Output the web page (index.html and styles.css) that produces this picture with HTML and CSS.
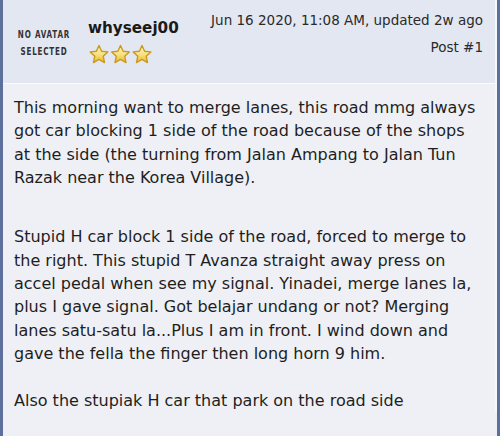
FILE: index.html
```html
<!DOCTYPE html>
<html>
<head>
<meta charset="utf-8">
<link rel="stylesheet" href="styles.css">
</head>
<body>
<div class="post">
  <div class="head">
    <div class="avatar"><span>NO AVATAR</span><span>SELECTED</span></div>
    <div class="user">
      <div class="name">whyseej00</div>
      <div class="stars">
        <svg width="66" height="21" viewBox="0 0 66 21">
          <defs>
            <linearGradient id="g" x1="0" y1="0" x2="0" y2="1">
              <stop offset="0" stop-color="#fff6c8"/>
              <stop offset="0.55" stop-color="#f7df7a"/>
              <stop offset="1" stop-color="#e9b930"/>
            </linearGradient>
          </defs>
          <g fill="url(#g)" stroke="#c99a1e" stroke-width="1.4" stroke-linejoin="round">
            <path d="M11 1.5 L13.6 7.2 L19.8 7.9 L15.2 12.2 L16.5 18.6 L11 15.4 L5.5 18.6 L6.8 12.2 L2.2 7.9 L8.4 7.2 Z"/>
            <path transform="translate(21.5 0)" d="M11 1.5 L13.6 7.2 L19.8 7.9 L15.2 12.2 L16.5 18.6 L11 15.4 L5.5 18.6 L6.8 12.2 L2.2 7.9 L8.4 7.2 Z"/>
            <path transform="translate(43 0)" d="M11 1.5 L13.6 7.2 L19.8 7.9 L15.2 12.2 L16.5 18.6 L11 15.4 L5.5 18.6 L6.8 12.2 L2.2 7.9 L8.4 7.2 Z"/>
          </g>
        </svg>
      </div>
    </div>
    <div class="meta">
      <div class="date">Jun 16 2020, 11:08 AM, updated 2w ago</div>
      <div class="num">Post #1</div>
    </div>
  </div>
  <div class="body">
    <p class="p1">This morning want to merge lanes, this road mmg always got car blocking 1 side of the road because of the shops at the side (the turning from Jalan Ampang to Jalan Tun Razak near the Korea Village).</p>
    <p class="p2">Stupid H car block 1 side of the road, forced to merge to the right. This stupid T Avanza straight away press on accel pedal when see my signal. Yinadei, merge lanes la, plus I gave signal. Got belajar undang or not? Merging lanes satu-satu la...Plus I am in front. I wind down and gave the fella the finger then long horn 9 him.</p>
    <p class="p3">Also the stupiak H car that park on the road side</p>
  </div>
</div>
</body>
</html>
```

FILE: styles.css
```css
html, body {
  margin: 0;
  padding: 0;
  background: #eef0f5;
}
.post {
  width: 500px;
  height: 436px;
  box-sizing: border-box;
  border-left: 3px solid #5d6f9b;
  border-right: 3px solid #5d6f9b;
  background: #eef0f5;
  overflow: hidden;
  font-family: "DejaVu Sans", Verdana, sans-serif;
  color: #1e1e1e;
}
.head {
  height: 84px;
  box-sizing: border-box;
  background: #e3e7f1;
  border-bottom: 1px solid #fbfcfe;
  border-right: 2px solid #f6f7fa;
  display: flex;
  align-items: flex-start;
}
.avatar {
  width: 82px;
  padding-top: 20px;
  display: flex;
  flex-direction: column;
  align-items: center;
  font-family: "DejaVu Sans Condensed", "DejaVu Sans", sans-serif;
  font-size: 8px;
  font-weight: bold;
  letter-spacing: 0.8px;
  line-height: 13px;
  color: #333;
  transform: scaleY(1.3);
  transform-origin: top center;
}
.user {
  padding-top: 18px;
  padding-left: 3px;
}
.name {
  font-family: "DejaVu Sans", Verdana, sans-serif;
  font-weight: bold;
  font-size: 15.2px;
  line-height: 20px;
  color: #1a1a1a;
}
.stars {
  margin-top: 6px;
  height: 21px;
}
.stars svg { display: block; }
.meta {
  margin-left: auto;
  padding-top: 10px;
  padding-right: 12px;
  text-align: right;
  font-size: 13.5px;
  line-height: 20px;
  color: #2a2a2a;
}
.num {
  margin-top: 7px;
}
.body {
  padding: 12px 15px 0 11px;
  border-right: 2px solid #f6f7fa;
  font-size: 16px;
  line-height: 23.4px;
}
.body p { margin: 0; }
.p2 { margin-top: 35.5px !important; }
.p3 { margin-top: 23.5px !important; }
```
